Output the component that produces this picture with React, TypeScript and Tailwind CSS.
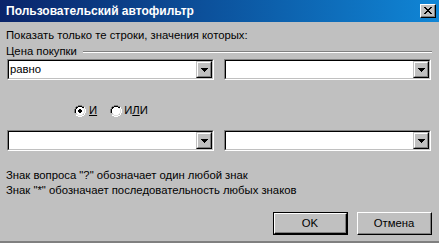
import React from "react";

const font = { fontFamily: '"Liberation Sans", Arial, sans-serif' };

function Combo({ value }: { value?: string }) {
  return (
    <div className="w-[207px] h-[21px] border border-t-[#808080] border-l-[#808080] border-b-white border-r-white">
      <div className="h-full flex border border-t-black border-l-black border-b-[#c0c0c0] border-r-[#c0c0c0] bg-white">
        <div className="flex-1 flex items-center pl-[1px] text-[11.3px] text-black leading-none">
          {value}
        </div>
        <div className="w-[16px] h-full border border-t-[#c0c0c0] border-l-[#c0c0c0] border-b-black border-r-black">
          <div className="h-full flex items-center justify-center bg-[#c0c0c0] border border-t-white border-l-white border-b-[#808080] border-r-[#808080]">
            <svg width="7" height="4" viewBox="0 0 7 4">
              <path d="M0 0h7v1H0zM1 1h5v1H1zM2 2h3v1H2zM3 3h1v1H3z" fill="#000" />
            </svg>
          </div>
        </div>
      </div>
    </div>
  );
}

function Radio({ checked }: { checked?: boolean }) {
  return (
    <svg width="12" height="12" viewBox="0 0 12 12" shapeRendering="crispEdges">
      <path d="M4 0h4v1H4zM2 1h2v1H2zM8 1h2v1H8zM1 2h1v2H1zM0 4h1v4H0z" fill="#808080" />
      <path d="M4 1h4v1H4zM2 2h2v1H2zM8 2h2v1H8zM1 4h1v4H1zM2 3h1v1H2z" fill="#000" />
      <path d="M10 2h1v2h-1zM11 4h1v4h-1zM10 8h1v2h-1zM8 10h2v1H8zM4 11h4v1H4zM2 10h2v1H2z" fill="#fff" />
      <path d="M9 3h1v1H9zM10 4h1v4h-1zM9 8h1v1H9zM8 9h1v1H8zM4 10h4v1H4zM2 9h2v1H2z" fill="#dfdfdf" />
      <path d="M4 2h4v1H4zM3 3h6v1H3zM2 4h8v4H2zM3 8h6v1H3zM4 9h4v1H4z" fill="#fff" />
      {checked && <path d="M5 4h2v1H5zM4 5h4v2H4zM5 7h2v1H5z" fill="#000" />}
    </svg>
  );
}

function Button({ label, primary }: { label: string; primary?: boolean }) {
  const inner = (
    <div className="h-full flex items-center justify-center border border-t-white border-l-white border-b-black border-r-black">
      <div className="h-full w-full flex items-center justify-center border-b border-r border-b-[#808080] border-r-[#808080] text-[11.3px] text-black">
        {label}
      </div>
    </div>
  );
  return primary ? (
    <div className="w-[75px] h-[23px] border border-black">{inner}</div>
  ) : (
    <div className="w-[75px] h-[23px]">{inner}</div>
  );
}

export default function App() {
  return (
    <div
      className="w-[439px] h-[243px] bg-[#c0c0c0] flex flex-col border-b-2 border-b-[#808080] overflow-hidden"
      style={font}
    >
      <div className="h-[22px] shrink-0 flex items-center justify-between pl-[6px] pr-[3px] bg-gradient-to-r from-[#0a246a] to-[#1086d6]">
        <span className="text-white font-bold text-[12px] leading-none">
          Пользовательский автофильтр
        </span>
        <div className="w-[16px] h-[14px] border border-t-white border-l-white border-b-black border-r-black bg-[#c0c0c0]">
          <div className="h-full flex items-center justify-center border-b border-r border-b-[#808080] border-r-[#808080]">
            <svg width="8" height="7" viewBox="0 0 8 7" shapeRendering="crispEdges">
              <path
                d="M0 0h2v1H0zM6 0h2v1H6zM1 1h2v1H1zM5 1h2v1H5zM2 2h4v1H2zM3 3h2v1H3zM2 4h4v1H2zM1 5h2v1H1zM5 5h2v1H5zM0 6h2v1H0zM6 6h2v1H6z"
                fill="#000"
              />
            </svg>
          </div>
        </div>
      </div>

      <div className="flex flex-col px-[6px] text-[11.3px] text-black">
        <div className="mt-[7px] h-[13px] leading-[13px]">
          Показать только те строки, значения которых:
        </div>
        <div className="mt-[3px] h-[13px] flex items-center gap-[6px] leading-[13px]">
          <span>Цена покупки</span>
          <div className="flex-1 mr-[1px] border-t border-t-[#808080] border-b border-b-white" />
        </div>
        <div className="mt-[1px] ml-[1px] flex gap-[10px]">
          <Combo value="равно" />
          <Combo />
        </div>
        <div className="mt-[24px] h-[14px] flex items-center pl-[68px]">
          <Radio checked />
          <span className="ml-[3px] underline leading-none">И</span>
          <span className="ml-[13px] flex items-center">
            <Radio />
            <span className="ml-[2px] leading-none">
              И<span className="underline">Л</span>И
            </span>
          </span>
        </div>
        <div className="mt-[12px] ml-[1px] flex gap-[10px]">
          <Combo />
          <Combo />
        </div>
        <div className="mt-[17px] leading-[15px]">Знак вопроса "?" обозначает один любой знак</div>
        <div className="leading-[15px]">Знак "*" обозначает последовательность любых знаков</div>
        <div className="mt-[14px] flex justify-end gap-[9px] pr-[1px]">
          <Button label="OK" primary />
          <Button label="Отмена" />
        </div>
      </div>
    </div>
  );
}
